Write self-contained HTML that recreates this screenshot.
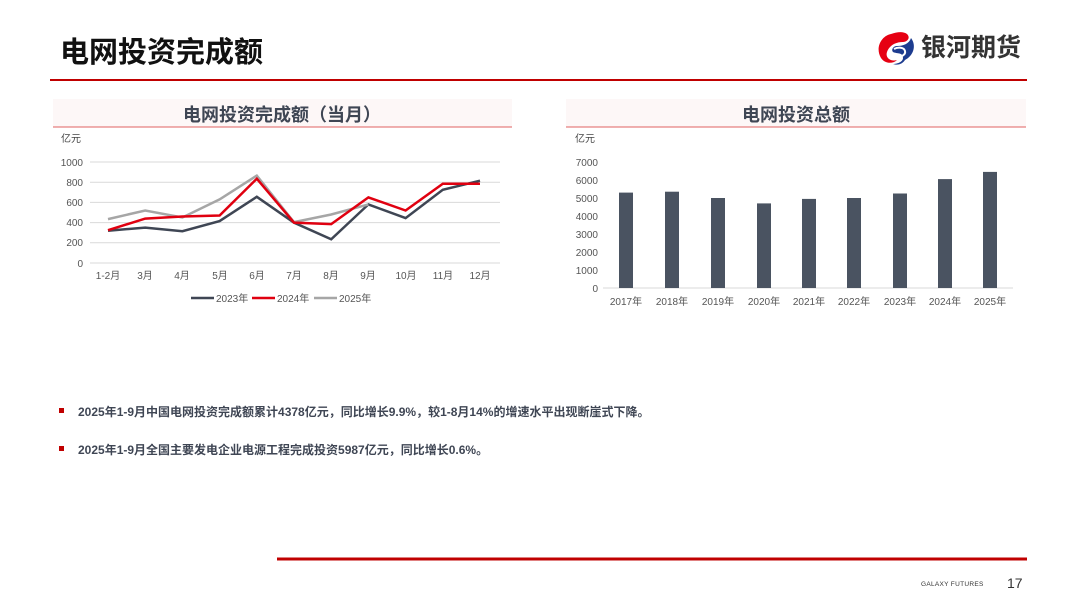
<!DOCTYPE html>
<html><head><meta charset="utf-8"><style>
body{margin:0;width:1080px;height:608px;background:#fff;overflow:hidden;font-family:"Liberation Sans","Noto Sans CJK SC",sans-serif}
</style></head><body>
<svg width="1080" height="608" viewBox="0 0 1080 608" xmlns="http://www.w3.org/2000/svg" font-family="Liberation Sans, Noto Sans CJK SC, sans-serif">
<text x="60" y="62" font-size="29" font-weight="bold" fill="#111">电网投资完成额</text>
<line x1="50" y1="80" x2="1027" y2="80" stroke="#c00000" stroke-width="2"/>
<g transform="translate(877,30)">
<path d="M14 4 C4 6 -2 18 4 28 C8 34 16 34 20 30 C14 32 8 28 10 22 C12 16 18 12 26 12 C30 12 34 8 30 4 C26 1 20 2 14 4Z" fill="#e60012"/>
<path d="M28 30 C36 26 40 16 34 8 C32 14 26 16 20 16 C16 16 14 20 16 22 C20 24 26 22 26 28 C26 32 20 34 16 34 C22 36 26 33 28 30Z" fill="#1d3c8f"/>
<path d="M17 19 C21 17 27 17 28 21 C29 25 24 27 20 27" fill="none" stroke="#fff" stroke-width="2"/>
</g>
<text x="921" y="56" font-size="25" font-weight="bold" fill="#333">银河期货</text>
<rect x="53" y="99" width="459" height="28" fill="#fdf7f7"/>
<line x1="53" y1="127" x2="512" y2="127" stroke="#e06060" stroke-width="1"/>
<text x="282" y="121" font-size="18" font-weight="bold" fill="#3f4654" text-anchor="middle">电网投资完成额（当月）</text>
<text x="61" y="142" font-size="10" fill="#444">亿元</text>
<g stroke="#d9d9d9" stroke-width="1">
<line x1="90" y1="162" x2="500" y2="162"/><line x1="90" y1="182.2" x2="500" y2="182.2"/><line x1="90" y1="202.4" x2="500" y2="202.4"/><line x1="90" y1="222.6" x2="500" y2="222.6"/><line x1="90" y1="242.8" x2="500" y2="242.8"/><line x1="90" y1="263" x2="500" y2="263"/></g>
<g font-size="10" fill="#555" text-anchor="end">
<text x="83" y="166">1000</text><text x="83" y="186">800</text><text x="83" y="206">600</text><text x="83" y="226">400</text><text x="83" y="246">200</text><text x="83" y="267">0</text></g>
<g font-size="10" fill="#555" text-anchor="middle">
<text x="108" y="279">1-2月</text><text x="145" y="279">3月</text><text x="182" y="279">4月</text><text x="220" y="279">5月</text><text x="257" y="279">6月</text><text x="294" y="279">7月</text><text x="331" y="279">8月</text><text x="368" y="279">9月</text><text x="406" y="279">10月</text><text x="443" y="279">11月</text><text x="480" y="279">12月</text></g>
<polyline fill="none" stroke="#3f4654" stroke-width="2.5" points="108,230.7 145.2,227.6 182.4,231.2 219.6,221.1 256.8,196.8 294,222.6 331.2,239.3 368.4,204.4 405.6,218.1 442.8,189.8 480,180.7"/>
<polyline fill="none" stroke="#a6a6a6" stroke-width="2.5" points="108,219.1 145.2,210.5 182.4,217.5 219.6,199.4 256.8,175.6 294,222.1 331.2,214.5 368.4,204.4"/>
<polyline fill="none" stroke="#e00010" stroke-width="2.5" points="108,230.2 145.2,218.6 182.4,216.5 219.6,215.5 256.8,178.7 294,222.6 331.2,224.1 368.4,197.4 405.6,210.5 442.8,183.7 480,183.7"/>
<g font-size="10" fill="#555">
<line x1="191" y1="298" x2="214" y2="298" stroke="#3f4654" stroke-width="2.5"/><text x="216" y="302">2023年</text>
<line x1="252" y1="298" x2="275" y2="298" stroke="#e00010" stroke-width="2.5"/><text x="277" y="302">2024年</text>
<line x1="314" y1="298" x2="337" y2="298" stroke="#a6a6a6" stroke-width="2.5"/><text x="339" y="302">2025年</text></g>
<rect x="566" y="99" width="460" height="28" fill="#fdf7f7"/>
<line x1="566" y1="127" x2="1026" y2="127" stroke="#e06060" stroke-width="1"/>
<text x="796" y="121" font-size="18" font-weight="bold" fill="#3f4654" text-anchor="middle">电网投资总额</text>
<text x="575" y="142" font-size="10" fill="#444">亿元</text>
<g font-size="10" fill="#555" text-anchor="end">
<text x="598" y="166">7000</text><text x="598" y="184">6000</text><text x="598" y="202">5000</text><text x="598" y="220">4000</text><text x="598" y="238">3000</text><text x="598" y="256">2000</text><text x="598" y="274">1000</text><text x="598" y="292">0</text></g>
<line x1="603" y1="288" x2="1013" y2="288" stroke="#d9d9d9"/>
<g fill="#4a5361">
<rect x="619" y="192.6" width="14" height="95.4"/><rect x="665" y="191.7" width="14" height="96.3"/><rect x="711" y="198" width="14" height="90"/><rect x="757" y="203.4" width="14" height="84.6"/><rect x="802" y="198.9" width="14" height="89.1"/><rect x="847" y="198" width="14" height="90"/><rect x="893" y="193.5" width="14" height="94.5"/><rect x="938" y="179.1" width="14" height="108.9"/><rect x="983" y="171.9" width="14" height="116.1"/></g>
<g font-size="10" fill="#555" text-anchor="middle">
<text x="626" y="305">2017年</text><text x="672" y="305">2018年</text><text x="718" y="305">2019年</text><text x="764" y="305">2020年</text><text x="809" y="305">2021年</text><text x="854" y="305">2022年</text><text x="900" y="305">2023年</text><text x="945" y="305">2024年</text><text x="990" y="305">2025年</text></g>
<rect x="59" y="408" width="5" height="5" fill="#c00000"/>
<text x="78" y="416" font-size="12" font-weight="bold" fill="#3f4654">2025年1-9月中国电网投资完成额累计4378亿元，同比增长9.9%，较1-8月14%的增速水平出现断崖式下降。</text>
<rect x="59" y="446" width="5" height="5" fill="#c00000"/>
<text x="78" y="454" font-size="12" font-weight="bold" fill="#3f4654">2025年1-9月全国主要发电企业电源工程完成投资5987亿元，同比增长0.6%。</text>
<line x1="277" y1="559" x2="1027" y2="559" stroke="#c00000" stroke-width="3"/>
<text x="921" y="586" font-size="6.5" fill="#333" letter-spacing="0.3">GALAXY FUTURES</text>
<text x="1007" y="588" font-size="14" fill="#333">17</text>
</svg>
</body></html>
